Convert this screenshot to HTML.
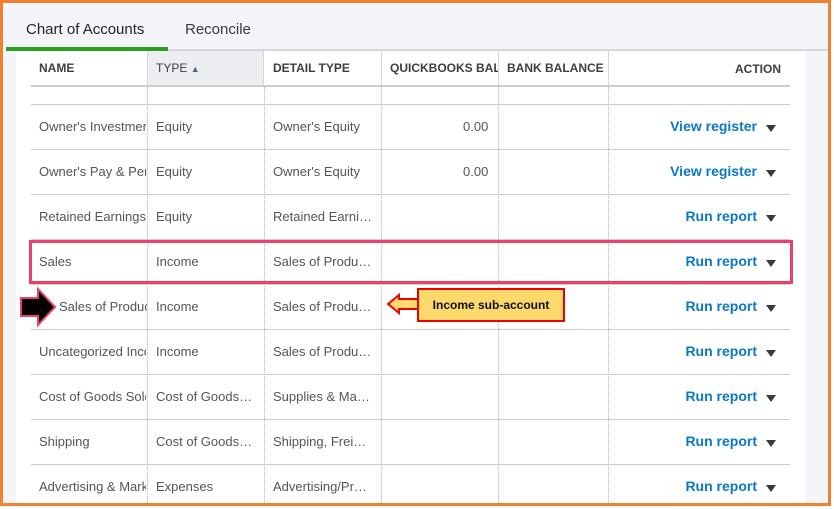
<!DOCTYPE html>
<html><head><meta charset="utf-8"><style>
*{margin:0;padding:0;box-sizing:border-box}
html,body{width:834px;height:509px;overflow:hidden}
body{position:relative;background:#fff;font-family:"Liberation Sans",sans-serif}
.frame{position:absolute;left:0;top:0;width:831px;height:506px;border:3px solid #f0812f;background:#f4f5f8;overflow:hidden}
.abs{position:absolute}
.tab{position:absolute;top:18px;font-size:15px;color:#393a3d}
.white{position:absolute;left:13px;top:48px;width:789px;height:452px;background:#fff}
.hl{position:absolute;left:28px;width:759px;height:1px;background:#ccc}
.vl{position:absolute;top:84px;height:416px;border-left:1px dotted #b8b8b8}
.th{position:absolute;top:58px;font-size:12px;font-weight:bold;color:#3d3e41;white-space:nowrap;overflow:hidden}
.td{position:absolute;font-size:13px;color:#555;white-space:nowrap;overflow:hidden}
.act{position:absolute;left:640px;width:114px;text-align:right;font-size:14px;font-weight:bold;color:#0b77c5}
.car{position:absolute;left:763px;width:0;height:0;border-left:5.5px solid transparent;border-right:5.5px solid transparent;border-top:7px solid #393a3d}
</style></head><body>
<div class="frame">
 <div class="tab" style="left:23px;color:#222">Chart of Accounts</div>
 <div class="tab" style="left:182px">Reconcile</div>
 <div class="abs" style="left:3px;top:44px;width:162px;height:4px;background:#2ca01c"></div>
 <div class="abs" style="left:165px;top:46px;width:660px;height:2px;background:#d4d7dc"></div>
 <div class="white"></div>
 <div class="abs" style="left:144px;top:48px;width:117px;height:35px;background:#eceef1;border-left:1px solid #d4d7dc;border-right:1px solid #d4d7dc"></div>
 <div class="abs" style="left:378px;top:48px;width:1px;height:35px;background:#d4d7dc"></div>
 <div class="abs" style="left:495px;top:48px;width:1px;height:35px;background:#d4d7dc"></div>
 <div class="abs" style="left:605px;top:48px;width:1px;height:35px;background:#d4d7dc"></div>
 <div class="th" style="left:36px">NAME</div>
 <div class="th" style="left:153px;font-weight:normal">TYPE <span style="font-size:9px;color:#4a6a8a">&#9650;</span></div>
 <div class="th" style="left:270px">DETAIL TYPE</div>
 <div class="th" style="left:387px;width:108px">QUICKBOOKS BALANCE</div>
 <div class="th" style="left:504px">BANK BALANCE</div>
 <div class="th" style="left:732px;top:59px">ACTION</div>
 <div class="abs" style="left:28px;top:82px;width:759px;height:2px;background:#ccc"></div>
 <div class="vl" style="left:144px"></div>
 <div class="vl" style="left:261px"></div>
 <div class="vl" style="left:378px"></div>
 <div class="vl" style="left:495px"></div>
 <div class="vl" style="left:605px"></div>
 <div class="hl" style="top:101px"></div>
 <div class="hl" style="top:146px"></div>
 <div class="hl" style="top:191px"></div>
 <div class="hl" style="top:236px"></div>
 <div class="hl" style="top:281px"></div>
 <div class="hl" style="top:326px"></div>
 <div class="hl" style="top:371px"></div>
 <div class="hl" style="top:416px"></div>
 <div class="hl" style="top:461px"></div>

 <div class="td" style="left:36px;top:116px;width:107px">Owner's Investment</div>
 <div class="td" style="left:153px;top:116px">Equity</div>
 <div class="td" style="left:270px;top:116px">Owner's Equity</div>
 <div class="td" style="left:460px;top:116px">0.00</div>
 <div class="act" style="top:115px">View register</div><div class="car" style="top:122px"></div>

 <div class="td" style="left:36px;top:161px;width:107px">Owner's Pay &amp; Personal</div>
 <div class="td" style="left:153px;top:161px">Equity</div>
 <div class="td" style="left:270px;top:161px">Owner's Equity</div>
 <div class="td" style="left:460px;top:161px">0.00</div>
 <div class="act" style="top:160px">View register</div><div class="car" style="top:167px"></div>

 <div class="td" style="left:36px;top:206px;width:107px">Retained Earnings</div>
 <div class="td" style="left:153px;top:206px">Equity</div>
 <div class="td" style="left:270px;top:206px">Retained Earni…</div>
 <div class="act" style="top:205px">Run report</div><div class="car" style="top:212px"></div>

 <div class="td" style="left:36px;top:251px">Sales</div>
 <div class="td" style="left:153px;top:251px">Income</div>
 <div class="td" style="left:270px;top:251px">Sales of Produ…</div>
 <div class="act" style="top:250px">Run report</div><div class="car" style="top:257px"></div>

 <div class="td" style="left:56px;top:296px;width:88px">Sales of Product</div>
 <div class="td" style="left:153px;top:296px">Income</div>
 <div class="td" style="left:270px;top:296px">Sales of Produ…</div>
 <div class="act" style="top:295px">Run report</div><div class="car" style="top:302px"></div>

 <div class="td" style="left:36px;top:341px;width:107px">Uncategorized Income</div>
 <div class="td" style="left:153px;top:341px">Income</div>
 <div class="td" style="left:270px;top:341px">Sales of Produ…</div>
 <div class="act" style="top:340px">Run report</div><div class="car" style="top:347px"></div>

 <div class="td" style="left:36px;top:386px;width:107px">Cost of Goods Sold</div>
 <div class="td" style="left:153px;top:386px">Cost of Goods…</div>
 <div class="td" style="left:270px;top:386px">Supplies &amp; Ma…</div>
 <div class="act" style="top:385px">Run report</div><div class="car" style="top:392px"></div>

 <div class="td" style="left:36px;top:431px">Shipping</div>
 <div class="td" style="left:153px;top:431px">Cost of Goods…</div>
 <div class="td" style="left:270px;top:431px">Shipping, Frei…</div>
 <div class="act" style="top:430px">Run report</div><div class="car" style="top:437px"></div>

 <div class="td" style="left:36px;top:476px;width:107px">Advertising &amp; Marketing</div>
 <div class="td" style="left:153px;top:476px">Expenses</div>
 <div class="td" style="left:270px;top:476px">Advertising/Pr…</div>
 <div class="act" style="top:475px">Run report</div><div class="car" style="top:482px"></div>

 <div class="abs" style="left:26px;top:237px;width:764px;height:44px;border:3px solid #ec3f6c"></div>
</div>
<svg class="abs" style="left:0;top:0" width="834" height="509">
 <path d="M21 298 H38 V289 L55 307 L38 325 V316 H21 Z" fill="#000" stroke="#ec3f6c" stroke-width="2"/>
 <path d="M388 304 L399 295 V299 H418 V309 H399 V313 Z" fill="#fdd86a" stroke="#e00" stroke-width="2"/>
 <rect x="418" y="289" width="146" height="32" fill="#fdd86a" stroke="#e00" stroke-width="2"/>
 <text x="491" y="309" text-anchor="middle" font-family="Liberation Sans,sans-serif" font-size="12" font-weight="bold" fill="#111">Income sub-account</text>
</svg>
</body></html>
